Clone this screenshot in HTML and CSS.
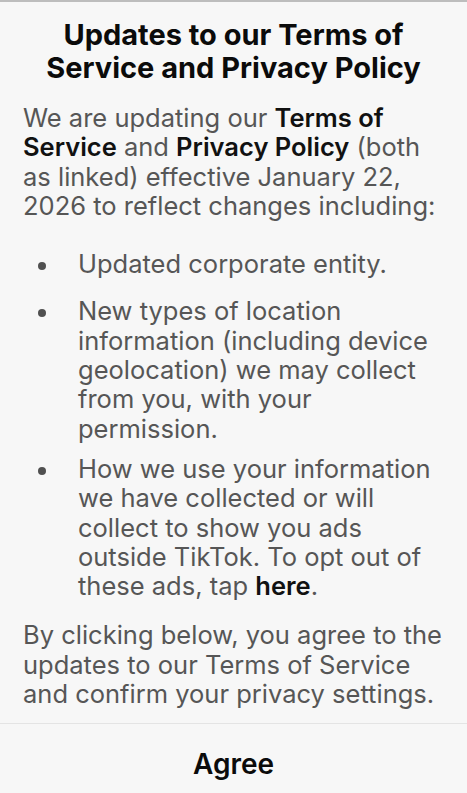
FILE: index.html
```html
<!DOCTYPE html>
<html lang="en">
<head>
    <meta charset="UTF-8">
    <meta name="viewport" content="width=device-width, initial-scale=1.0">
    <title>Terms Update</title>
    <link rel="stylesheet" href="styles.css">
</head>
<body>
    <div class="sheet">
        <h1 class="title">Updates to our Terms of Service and Privacy Policy</h1>

        <p class="text">We are updating our <b>Terms of Service</b> and <b>Privacy Policy</b> (both as linked) effective January 22, 2026 to reflect changes including:</p>

        <ul class="changes">
            <li class="change first"><span>Updated corporate entity.</span></li>
            <li class="change"><span>New types of location information (including device geolocation) we may collect from you, with your permission.</span></li>
            <li class="change"><span>How we use your information we have collected or will collect to show you ads outside TikTok. To opt out of these ads, tap <b>here</b>.</span></li>
        </ul>

        <p class="text closing">By clicking below, you agree to the updates to our Terms of Service and confirm your privacy settings.</p>
    </div>

    <div class="actions">
        <button type="button" class="agree">Agree</button>
    </div>
</body>
</html>
```

FILE: styles.css
```css
body {
    font-family: 'Inter', 'Noto Sans', sans-serif;
    margin: 0;
    background-color: #f7f7f7;
    border-top: 2px solid #bdbdbd;
    height: 791px;
    overflow: hidden;
}

.sheet {
    padding: 16px 23px 15px;
}

.title {
    margin: 0;
    font-size: 29px;
    line-height: 33px;
    font-weight: 700;
    text-align: center;
    color: #0b0b0b;
}

.text {
    margin: 19px 0 0;
    font-size: 25.5px;
    line-height: 29.3px;
    color: #565656;
}

.text b {
    font-weight: 600;
    color: #111;
}

.changes {
    list-style: none;
    margin: 29px 0 0;
    padding: 0;
}

.change {
    display: grid;
    grid-template-columns: 55px 1fr;
    font-size: 25.5px;
    line-height: 29.3px;
    color: #565656;
    margin-bottom: 11px;
}

.change.first {
    margin-bottom: 18px;
}

.change::before {
    content: '';
    width: 8px;
    height: 8px;
    margin: 13px 0 0 15px;
    border-radius: 50%;
    background-color: #505050;
}

.change b {
    font-weight: 600;
    color: #111;
}

.text.closing {
    margin-top: 20px;
}

.actions {
    border-top: 1px solid #e4e4e4;
    text-align: center;
}

.agree {
    font-family: inherit;
    font-size: 28px;
    line-height: 33px;
    font-weight: 600;
    color: #0b0b0b;
    background: none;
    border: none;
    padding: 24px 20px 20px;
    cursor: pointer;
}
```
